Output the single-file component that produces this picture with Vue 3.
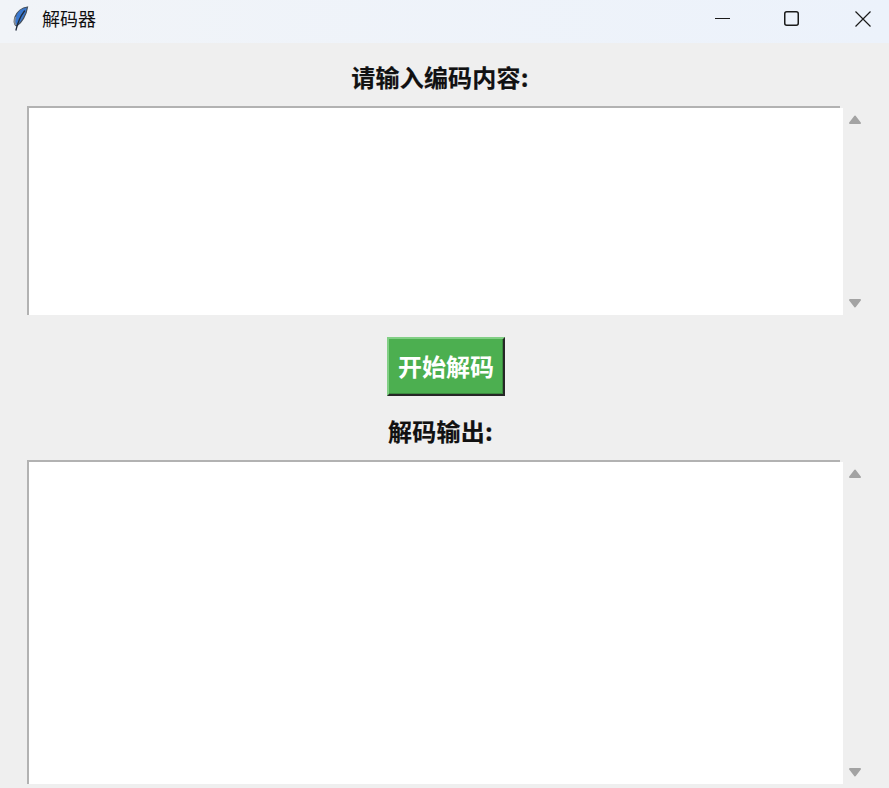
<template>
  <div class="window">
    <header class="titlebar">
      <svg class="feather" width="18" height="26" viewBox="0 0 18 26">
        <path d="M15.500 1C10 1.500 5 5.500 3 11c-1 3-1 6 .3 8l1.400 1C9.500 17 14.500 9 15.500 1z" fill="#3a78cf" stroke="#47505c" stroke-width="1.200"/>
        <path d="M12.500 5C9 9.500 6 15 4 24" fill="none" stroke="#1f2a3a" stroke-width="1.300" stroke-linecap="round"/>
        <path d="M3.500 11c-1 3-1 6 .3 8" fill="none" stroke="#8a8f96" stroke-width="1.500"/>
      </svg>
      <span class="title">解码器</span>
      <div class="controls">
        <svg width="71" height="43" viewBox="0 0 71 43"><path d="M30 18.500h15" stroke="#1a1a1a" stroke-width="1" fill="none"/></svg>
        <svg width="71" height="43" viewBox="0 0 71 43"><rect x="28.750" y="11.750" width="13.500" height="13.500" rx="2" stroke="#1a1a1a" stroke-width="1.500" fill="none"/></svg>
        <svg width="71" height="43" viewBox="0 0 71 43"><path d="M28.500 11.500l15 15M43.500 11.500l-15 15" stroke="#1a1a1a" stroke-width="1.200" fill="none"/></svg>
      </div>
    </header>

    <main class="content">
      <h2 class="label first">请输入编码内容:</h2>
      <div class="field input-field">
        <div class="textbox">
          <div class="textbox-inner"></div>
          <div class="textbox-edge"></div>
        </div>
        <div class="scrollbar">
          <svg width="14" height="10" viewBox="0 0 14 10"><path d="M7 1.500l5 6.500H2z" fill="#a3a3a3" stroke="#a3a3a3" stroke-width="2" stroke-linejoin="round"/></svg>
          <svg width="14" height="10" viewBox="0 0 14 10"><path d="M2 2h10L7 8.500z" fill="#a3a3a3" stroke="#a3a3a3" stroke-width="2" stroke-linejoin="round"/></svg>
        </div>
      </div>

      <button class="decode-btn" type="button">开始解码</button>

      <h2 class="label second">解码输出:</h2>
      <div class="field output-field">
        <div class="textbox">
          <div class="textbox-inner"></div>
          <div class="textbox-edge"></div>
        </div>
        <div class="scrollbar">
          <svg width="14" height="10" viewBox="0 0 14 10"><path d="M7 1.500l5 6.500H2z" fill="#a3a3a3" stroke="#a3a3a3" stroke-width="2" stroke-linejoin="round"/></svg>
          <svg width="14" height="10" viewBox="0 0 14 10"><path d="M2 2h10L7 8.500z" fill="#a3a3a3" stroke="#a3a3a3" stroke-width="2" stroke-linejoin="round"/></svg>
        </div>
      </div>
    </main>
  </div>
</template>

<script setup>
</script>

<style>
html, body {
  margin: 0;
  background: #efefef;
}
</style>

<style scoped>
.window {
  width: 889px;
  height: 788px;
  overflow: hidden;
  background: #efefef;
  font-family: "Noto Sans CJK SC", "Liberation Sans", sans-serif;
}

.titlebar {
  display: flex;
  align-items: center;
  height: 43px;
  padding-left: 12px;
  background: linear-gradient(90deg, #f1f4f8, #ecf2fb);
}

.feather {
  margin-right: 12px;
  margin-top: -6px;
}

.title {
  font-size: 18px;
  line-height: 26px;
  margin-top: -8px;
  color: #111;
}

.controls {
  display: flex;
  margin-left: auto;
  margin-right: -9px;
}

.content {
  display: flex;
  flex-direction: column;
  align-items: center;
}

.label {
  margin: 0;
  font-size: 24px;
  line-height: 30px;
  font-weight: 700;
  letter-spacing: 0.2px;
  color: #111;
  -webkit-text-stroke: 0.2px #111;
}

.label.first {
  margin-top: 19px;
  margin-bottom: 14px;
  margin-left: -9px;
}

.label.second {
  margin-top: 20px;
  margin-bottom: 14px;
  margin-left: -8px;
}

.field {
  display: flex;
  align-self: flex-start;
  margin-left: 27px;
}

.input-field {
  height: 209px;
}

.output-field {
  height: 324px;
}

.textbox {
  display: flex;
  width: 816px;
}

.textbox-inner {
  flex: 1;
  background: #fff;
  border-top: 2px solid #b2b2b2;
  border-left: 2px solid #b2b2b2;
}

.textbox-edge {
  width: 3px;
  margin-top: 2px;
  background: #fff;
}

.scrollbar {
  display: flex;
  flex-direction: column;
  justify-content: space-between;
  align-items: center;
  width: 24px;
  padding: 9px 0 7px;
  box-sizing: border-box;
}

.scrollbar svg {
  display: block;
}

.decode-btn {
  box-sizing: border-box;
  width: 118px;
  height: 59px;
  margin: 22px 0 0 3px;
  padding: 0 0 2px;
  font-family: inherit;
  font-size: 24px;
  font-weight: 700;
  color: #fff;
  background: #4caf50;
  border: 2px solid;
  border-color: #82cf85 #262626 #262626 #82cf85;
  box-shadow: inset -1px -1px 0 #3b8a3f;
}
</style>
